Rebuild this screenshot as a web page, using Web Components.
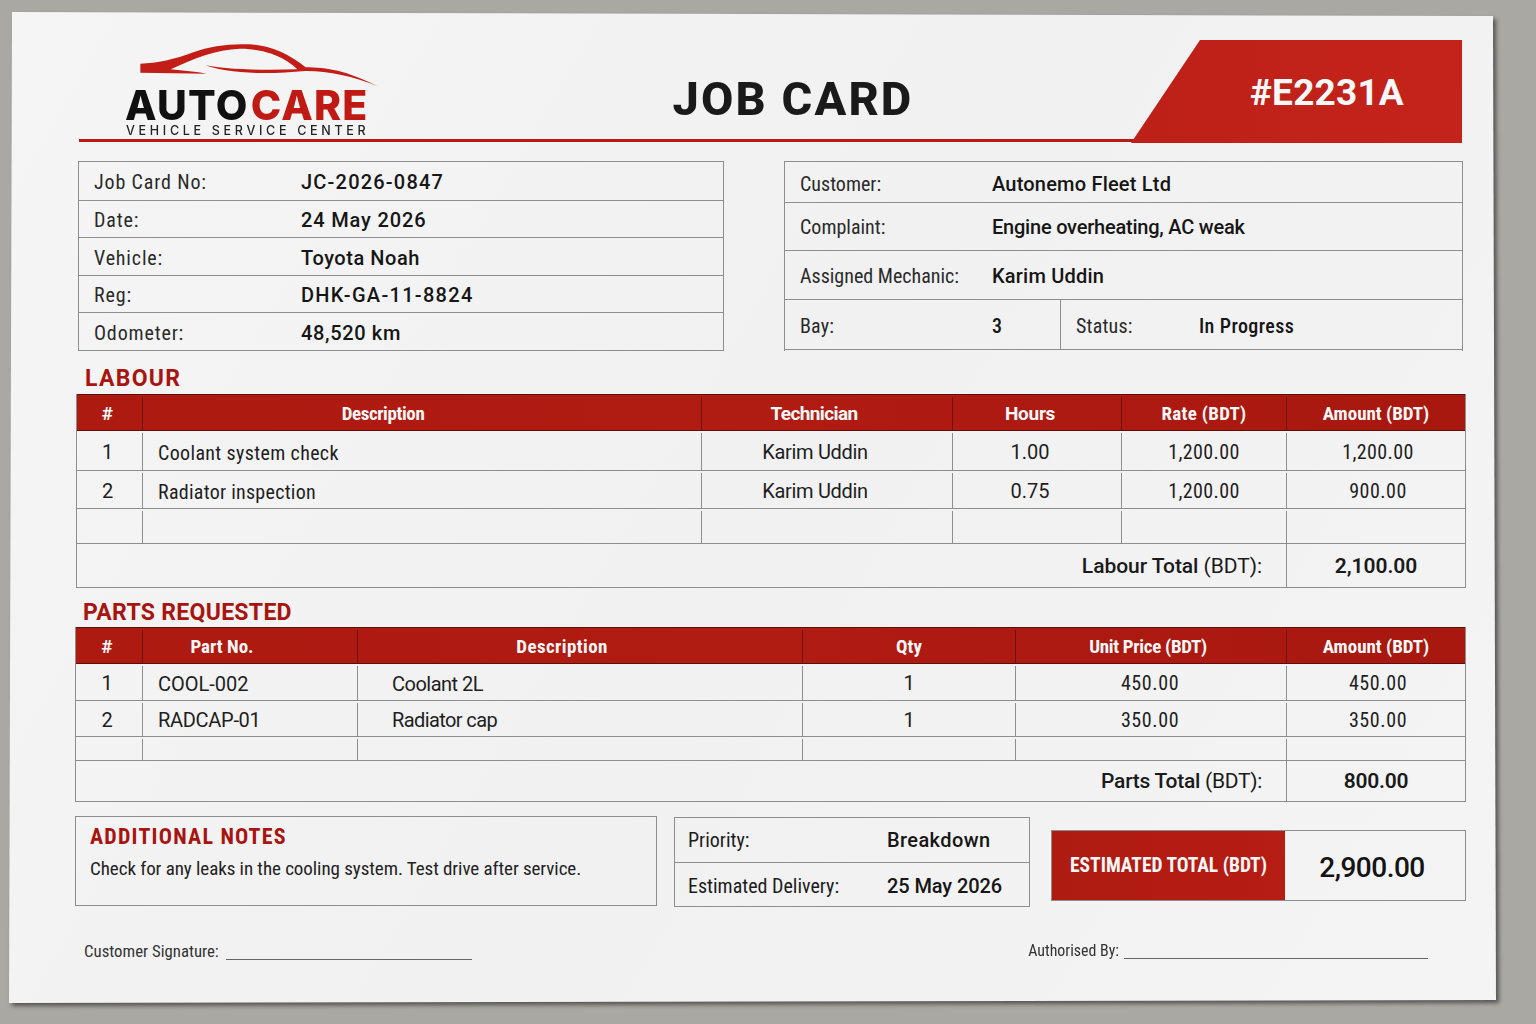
<!DOCTYPE html>
<html lang="en"><head><meta charset="utf-8"><title>Job Card</title>
<style>
html,body{margin:0;padding:0;height:1024px;overflow:hidden}
body{background:#a9a8a3;font-family:Roboto,"Liberation Sans",sans-serif;color:#1c1c1c}
</style></head><body>
<job-sheet>
  <job-header></job-header>
  <div slot="info" style="display:contents">
    <info-panel style="--w:646px;--ll:.85px">
      <info-row h="39" label="Job Card No:" value="JC-2026-0847" ls="1.2"></info-row>
      <info-row h="37" label="Date:" value="24 May 2026" ls=".85"></info-row>
      <info-row h="38" label="Vehicle:" value="Toyota Noah" ls=".55"></info-row>
      <info-row h="37" label="Reg:" value="DHK-GA-11-8824" ls="1.3"></info-row>
      <info-row h="38" label="Odometer:" value="48,520 km" ls=".65"></info-row>
    </info-panel>
    <info-panel style="--w:679px;--lw:192px">
      <info-row h="41" label="Customer:" value="Autonemo Fleet Ltd" ls=".2" style="padding-top:3px"></info-row>
      <info-row h="48" label="Complaint:" value="Engine overheating, AC weak" ls="-.22" style="padding-top:0"></info-row>
      <info-row h="49" label="Assigned Mechanic:" value="Karim Uddin" ls=".2"></info-row>
      <bay-row></bay-row>
    </info-panel>
  </div>
  <section-title style="--top:14px;--bottom:1px;--left:10px;--ls:1.3px">LABOUR</section-title>
  <doc-table style="--cols:65px 559px 251px 169px 165px 1fr;--ml:1px;--tw:1390px">
    <doc-row head h="37"><doc-cell style="padding-right:4px">#</doc-cell><doc-cell style="padding-right:78px;font-stretch:75%;letter-spacing:-.4px">Description</doc-cell><doc-cell style="padding-right:26px;letter-spacing:-.6px">Technician</doc-cell><doc-cell style="padding-right:14px;letter-spacing:-.3px">Hours</doc-cell><doc-cell style="font-stretch:75%;letter-spacing:.3px">Rate (BDT)</doc-cell><doc-cell style="font-stretch:75%">Amount (BDT)</doc-cell></doc-row>
    <doc-row h="40"><doc-cell style="padding-right:4px">1</doc-cell><doc-cell left style="padding-top:2px;font-stretch:75%;letter-spacing:.35px">Coolant system check</doc-cell><doc-cell style="padding-right:24px;letter-spacing:-.3px">Karim Uddin</doc-cell><doc-cell style="padding-right:14px">1.00</doc-cell><doc-cell style="font-stretch:75%;letter-spacing:.4px">1,200.00</doc-cell><doc-cell style="padding-left:4px;font-stretch:75%;letter-spacing:.4px">1,200.00</doc-cell></doc-row>
    <doc-row h="38"><doc-cell style="padding-right:4px">2</doc-cell><doc-cell left style="padding-top:2px;font-stretch:75%;letter-spacing:.27px">Radiator inspection</doc-cell><doc-cell style="padding-right:24px;letter-spacing:-.3px">Karim Uddin</doc-cell><doc-cell style="padding-right:14px">0.75</doc-cell><doc-cell style="font-stretch:75%;letter-spacing:.4px">1,200.00</doc-cell><doc-cell style="padding-left:4px;font-stretch:75%;letter-spacing:.5px">900.00</doc-cell></doc-row>
    <doc-row h="35"><doc-cell></doc-cell><doc-cell></doc-cell><doc-cell></doc-cell><doc-cell></doc-cell><doc-cell></doc-cell><doc-cell></doc-cell></doc-row>
    <total-row h="43" amount="2,100.00" amount-w="179" style="letter-spacing:-.05px"><b>Labour Total</b> (BDT):</total-row>
  </doc-table>
  <section-title style="--top:11px;--bottom:0px;--left:8px;--ls:.3px">PARTS REQUESTED</section-title>
  <doc-table style="--cols:66px 215px 445px 213px 271px 1fr">
    <doc-row head h="37"><doc-cell style="padding-right:4px">#</doc-cell><doc-cell style="padding-right:56px;font-stretch:75%">Part No.</doc-cell><doc-cell style="padding-right:36px;font-stretch:75%;letter-spacing:.4px">Description</doc-cell><doc-cell style="font-stretch:75%">Qty</doc-cell><doc-cell style="padding-right:6px;font-stretch:75%;letter-spacing:-.3px">Unit Price (BDT)</doc-cell><doc-cell style="font-stretch:75%">Amount (BDT)</doc-cell></doc-row>
    <doc-row h="37"><doc-cell style="padding-right:4px">1</doc-cell><doc-cell left style="padding-top:1px">COOL-002</doc-cell><doc-cell left wide style="padding-top:1px;letter-spacing:-.5px">Coolant 2L</doc-cell><doc-cell>1</doc-cell><doc-cell style="padding-right:2px;font-stretch:75%;letter-spacing:.6px">450.00</doc-cell><doc-cell style="padding-left:4px;font-stretch:75%;letter-spacing:.6px">450.00</doc-cell></doc-row>
    <doc-row h="36"><doc-cell style="padding-right:4px">2</doc-cell><doc-cell left style="padding-top:1px;letter-spacing:-.3px">RADCAP-01</doc-cell><doc-cell left wide style="padding-top:1px;letter-spacing:-.6px">Radiator cap</doc-cell><doc-cell>1</doc-cell><doc-cell style="padding-right:2px;font-stretch:75%;letter-spacing:.6px">350.00</doc-cell><doc-cell style="padding-left:4px;font-stretch:75%;letter-spacing:.6px">350.00</doc-cell></doc-row>
    <doc-row h="24"><doc-cell></doc-cell><doc-cell></doc-cell><doc-cell></doc-cell><doc-cell></doc-cell><doc-cell></doc-cell><doc-cell></doc-cell></doc-row>
    <total-row h="40" amount="800.00" amount-w="179" style="letter-spacing:-.28px"><b>Parts Total</b> (BDT):</total-row>
  </doc-table>
  <job-footer></job-footer>
</job-sheet>
<script>
function shell(el,html){el.attachShadow({mode:'open'}).innerHTML=html;}

customElements.define('job-sheet',class extends HTMLElement{constructor(){super();shell(this,`<style>
:host{display:block;width:1536px;height:1024px;box-sizing:border-box;padding:12px 0 0 9px;filter:drop-shadow(3px 3px 2px rgba(40,40,40,.65))}
.paper{box-sizing:border-box;width:1487px;height:992px;background:linear-gradient(120deg,#f5f5f5,#f1f1f1 50%,#f4f4f4);
clip-path:polygon(3px 0,1484px 4px,1487px 988px,0 991px);padding:28px 0 0 66px}
.info{display:flex;justify-content:space-between;width:1385px;margin-top:18px;margin-left:3px}
</style><div class="paper"><slot name="head"></slot><div class="info"><slot name="info"></slot></div><slot></slot></div>`);}
connectedCallback(){const h=this.querySelector('job-header');if(h)h.slot='head';}});

customElements.define('job-header',class extends HTMLElement{constructor(){super();shell(this,`<style>
:host{display:block;position:relative;width:1383px;height:103px;margin-left:4px}
.rule{position:absolute;left:0;right:0;bottom:1px;height:3px;background:#b81a14}
.row{display:grid;grid-template-columns:326px 1fr 331px;height:100%}
.logo{padding-left:47px;position:relative}
svg{display:block;margin-left:14px;margin-top:0;width:240px;height:50px}
.word{margin-top:-3px;margin-left:-1px;font:800 41px/36px Inter,"Open Sans",sans-serif;letter-spacing:1.25px;color:#111;white-space:nowrap}
.word span{color:#c01a14;margin-left:2px}
.tag{font:500 12.5px/14px Inter,sans-serif;letter-spacing:3.7px;color:#222;white-space:nowrap;margin-top:1px}
h1{margin:0;font:800 47px/1 Roboto,sans-serif;letter-spacing:2.1px;color:#1a1a1a;text-align:center;padding:35px 0 0 50px;white-space:nowrap}
.badge{position:relative;background:linear-gradient(90deg,#bd2017,#c4231a);clip-path:polygon(69px 0,100% 0,100% 100%,0 100%);color:#f8f8f8;font:700 37px/1 Roboto,sans-serif;letter-spacing:.2px;padding:34px 0 0 119px;white-space:nowrap}
</style>
<div class="rule"></div>
<div class="row"><div class="logo">
<svg viewBox="240 60 720 150" aria-hidden="true"><path fill="#c21d17" d="M241 131C290 130 345 118 400 97C450 78 510 70 570 73C640 78 690 105 737 142C800 142 860 152 953 199C880 168 800 152 735 153C640 162 520 165 436 136C500 148 600 152 712 148C680 115 620 86 540 86C470 88 400 115 332 148C370 152 410 155 440 161L241 158Z"/></svg>
<div class="word">AUTO<span>CARE</span></div>
<div class="tag">VEHICLE SERVICE CENTER</div>
</div><h1>JOB CARD</h1><div class="badge">#E2231A</div></div>`);}});

customElements.define('info-panel',class extends HTMLElement{constructor(){super();shell(this,`<style>
:host{display:block;box-sizing:border-box;width:var(--w);border:1px solid #8e8e8e;border-bottom:0}
</style><slot></slot>`);}});

customElements.define('info-row',class extends HTMLElement{constructor(){super();shell(this,'');}
connectedCallback(){const a=k=>this.getAttribute(k);this.shadowRoot.innerHTML=`<style>
:host{display:grid;grid-template-columns:var(--lw,207px) 1fr;align-items:center;box-sizing:border-box;height:${a('h')}px;border-bottom:1px solid #8e8e8e;padding:2px 0 0 15px;font-size:20px;white-space:nowrap}
.l{color:#2a2a2a;font-stretch:75%;letter-spacing:var(--ll,0)}
.v{font-weight:500;color:#161616;letter-spacing:${a('ls')||0}px}
</style><span class="l">${a('label')}</span><span class="v">${a('value')}</span>`;}});

customElements.define('bay-row',class extends HTMLElement{constructor(){super();shell(this,`<style>
:host{display:grid;grid-template-columns:276px 1fr;box-sizing:border-box;height:50px;border-bottom:1px solid #8e8e8e;font-size:20px;white-space:nowrap}
div{display:flex;align-items:center;padding:2px 0 0 15px}
.a{border-right:1px solid #8e8e8e}
.l{color:#2a2a2a;font-stretch:75%;letter-spacing:.2px}.v{font-weight:500;color:#161616;font-stretch:75%;letter-spacing:.4px}
.a .l{width:192px}.b .l{width:123px}
</style><div class="a"><span class="l">Bay:</span><span class="v">3</span></div><div class="b"><span class="l">Status:</span><span class="v">In Progress</span></div>`);}});

customElements.define('section-title',class extends HTMLElement{constructor(){super();shell(this,`<style>
:host{display:block;margin:var(--top) 0 var(--bottom) var(--left);font:700 23px/28px Roboto,sans-serif;letter-spacing:var(--ls);color:#a8140f}
</style><slot></slot>`);}});

customElements.define('doc-table',class extends HTMLElement{constructor(){super();shell(this,`<style>
:host{display:block;box-sizing:border-box;width:var(--tw,1391px);margin-left:var(--ml,0);border:1px solid #8e8e8e;border-top:0}
</style><slot></slot>`);}});

customElements.define('doc-row',class extends HTMLElement{constructor(){super();shell(this,`<style>
:host{display:grid;grid-template-columns:var(--cols);box-sizing:border-box;border-bottom:1px solid #8e8e8e;font-size:20px;color:#1e1e1e;padding-top:2px}
:host([head]){background:linear-gradient(90deg,#ad1a10,#b01b12 50%,#a8180f);color:#f7f7f7;font-weight:700;font-size:19px;border-bottom:1px solid #5d0f0a;border-top:1px solid #5d0f0a;padding-top:2px}
</style><slot></slot>`);}
connectedCallback(){this.style.height=this.getAttribute('h')+'px';}});

customElements.define('doc-cell',class extends HTMLElement{constructor(){super();shell(this,`<style>
:host{display:flex;align-items:center;justify-content:center;box-sizing:border-box;border-left:1px solid #8e8e8e;white-space:nowrap;min-width:0}
:host(:first-child){border-left:0}
:host([left]){justify-content:flex-start;padding-left:15px}
:host([wide]){padding-left:34px}
:host-context(doc-row[head]){border-left-color:#6d120c}
</style><slot></slot>`);}});

customElements.define('total-row',class extends HTMLElement{constructor(){super();shell(this,'');}
connectedCallback(){const g=k=>this.getAttribute(k);this.shadowRoot.innerHTML=`<style>
:host{display:grid;grid-template-columns:1fr ${g('amount-w')}px;box-sizing:border-box;height:${g('h')}px;font-size:21px;color:#1a1a1a}
.t{display:flex;align-items:center;justify-content:flex-end;padding-right:24px;white-space:nowrap}
.a{display:flex;align-items:center;justify-content:center;border-left:1px solid #8e8e8e;font-weight:600;font-size:21px}
::slotted(b){font-weight:500}
</style><div class="t"><span><slot></slot></span></div><div class="a">${g('amount')}</div>`;}});

customElements.define('job-footer',class extends HTMLElement{constructor(){super();shell(this,`<style>
:host{display:block;width:1391px;margin-top:14px}
.top{display:flex;align-items:flex-start;width:1391px}
.notes{width:582px;flex:none;box-sizing:border-box;height:90px;border:1px solid #8e8e8e;padding:7px 14px}
.notes h3{margin:0;font:700 22px/26px Roboto,sans-serif;font-stretch:75%;letter-spacing:1.2px;color:#a8140f}
.notes p{margin:7px 0 0;font-size:19px;line-height:24px;color:#222;white-space:nowrap;font-stretch:75%;letter-spacing:-.06px}
.meta{width:356px;flex:none;margin-left:17px;box-sizing:border-box;height:90px;border:1px solid #8e8e8e;margin-top:1px;font-size:20px}
.meta div{display:grid;grid-template-columns:199px 1fr;align-items:center;padding-left:13px;height:44px;white-space:nowrap}
.meta div+div{border-top:1px solid #8e8e8e;height:45px}
.meta span{font-stretch:75%}
.meta b{font-weight:500;color:#161616;letter-spacing:.4px}
.meta div+div b{letter-spacing:-.1px}
.total{width:415px;flex:none;margin-left:21px;display:grid;grid-template-columns:233px 1fr;height:71px;margin-top:14px;border:1px solid #8e8e8e;box-sizing:border-box}
.total span{display:flex;align-items:center;justify-content:center;background:linear-gradient(90deg,#ae1b11,#b61d14);color:#f7f7f7;font-weight:700;font-size:19.5px;font-stretch:75%;white-space:nowrap}
.total b{display:flex;align-items:center;justify-content:center;font-weight:500;font-size:28px;letter-spacing:-.5px;color:#141414;padding:3px 6px 0 0}
.sigs{box-sizing:border-box;display:flex;justify-content:space-between;margin-top:34px;font-size:16.8px;font-stretch:75%;color:#333;white-space:nowrap;padding-left:9px;width:1353px}
.sigs div{display:flex;align-items:flex-end;gap:7px}
.sigs i{display:block;height:1px;background:#666;margin-bottom:1px}
.auth{position:relative;top:-1px;font-size:15.9px}
.sigs .auth{gap:5px}
</style>
<div class="top">
<div class="notes"><h3>ADDITIONAL NOTES</h3><p>Check for any leaks in the cooling system. Test drive after service.</p></div>
<div class="meta"><div><span>Priority:</span><b>Breakdown</b></div><div><span>Estimated Delivery:</span><b>25 May 2026</b></div></div>
<div class="total"><span>ESTIMATED TOTAL (BDT)</span><b>2,900.00</b></div>
</div>
<div class="sigs"><div><span>Customer Signature:</span><i style="width:246px"></i></div><div class="auth"><span>Authorised By:</span><i style="width:304px"></i></div></div>`);}});
</script>
</body></html>
